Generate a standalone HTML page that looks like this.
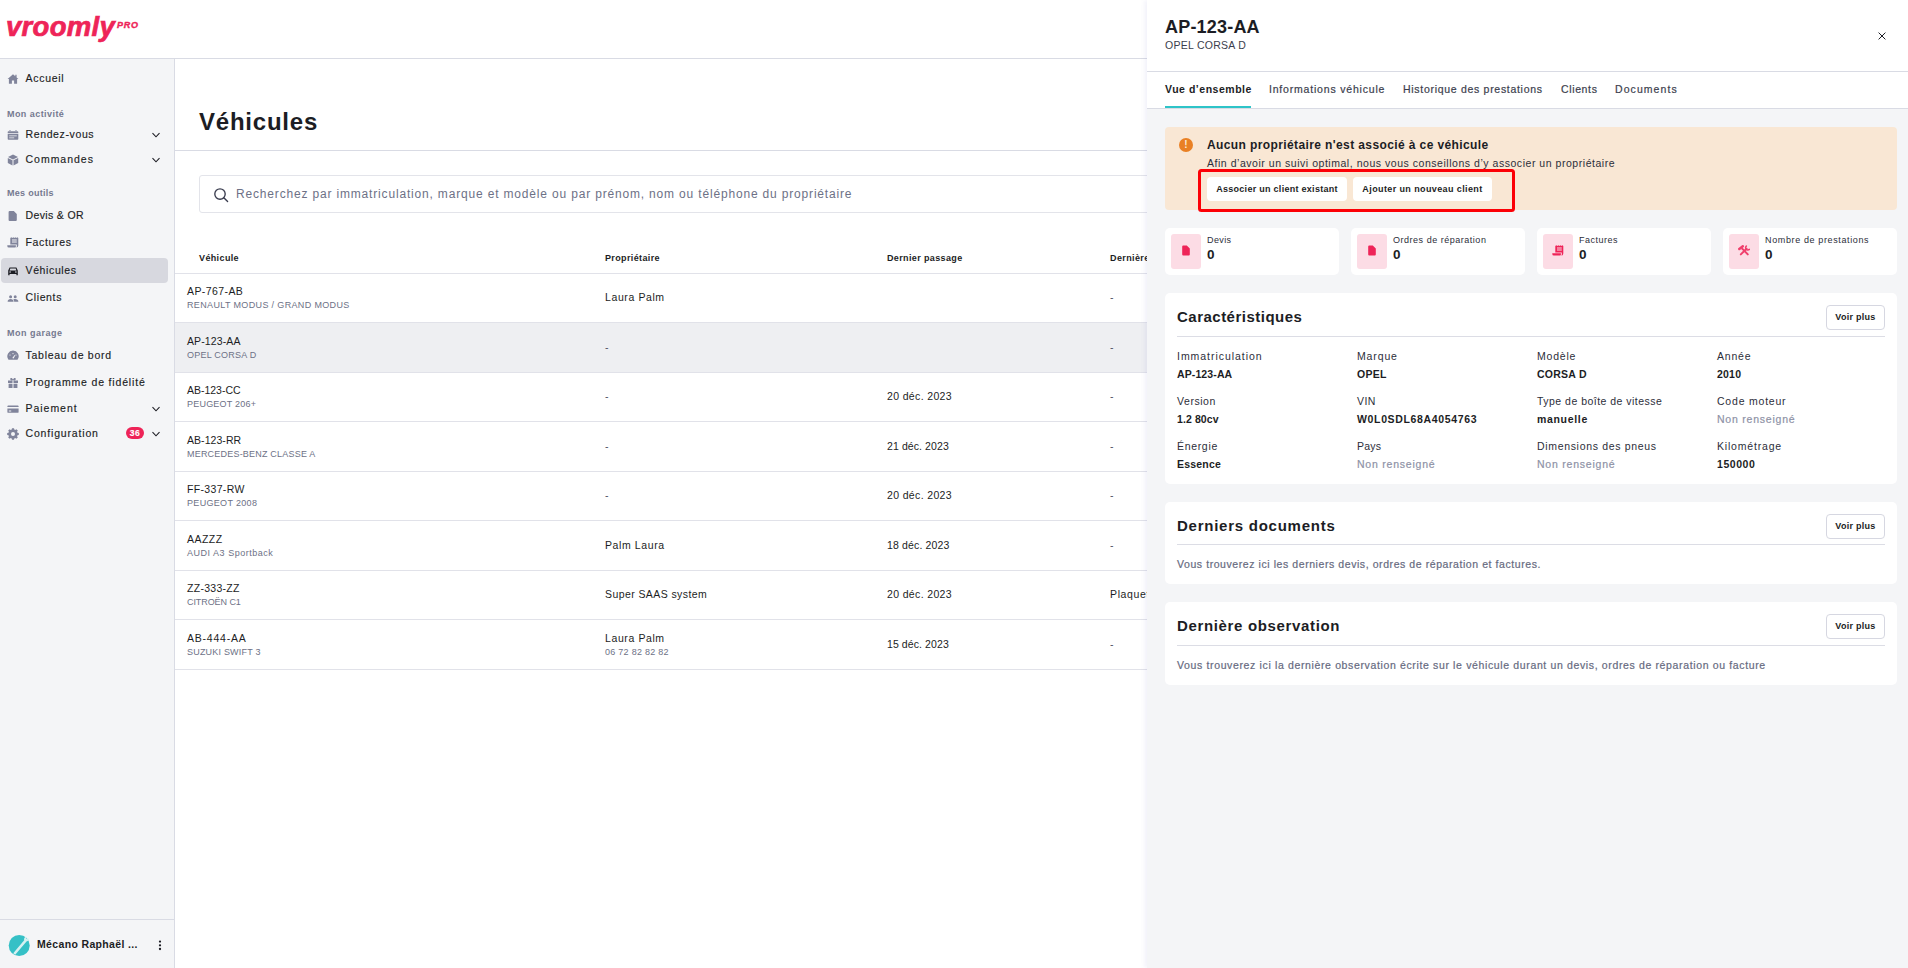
<!DOCTYPE html>
<html lang="fr"><head>
<meta charset="utf-8">
<title>Véhicules - Vroomly Pro</title>
<style>
*{box-sizing:border-box;margin:0;padding:0}
html,body{width:1908px;height:968px;overflow:hidden;background:#fff}
body{font-family:'Liberation Sans',sans-serif;font-size:10.5px;color:#1c1d24;position:relative;-webkit-font-smoothing:antialiased}
.t{white-space:nowrap;display:inline-block}
.abs{position:absolute}
/* header */
#hdr{position:absolute;left:0;top:0;width:1908px;height:59px;border-bottom:1px solid #d9dbe4;background:#fff}
#logo{position:absolute;left:6px;top:8.5px;color:#ee2458;font-weight:700;font-style:italic;font-size:27.5px;line-height:36px;letter-spacing:.3px;-webkit-text-stroke:.7px #ee2458}
#logo sup{font-size:9px;line-height:12px;position:absolute;left:111px;top:10.5px;letter-spacing:.8px;-webkit-text-stroke:.4px #ee2458}
/* sidebar */
#side{position:absolute;left:0;top:59px;width:175px;height:909px;background:#f4f5f7;border-right:1px solid #d9dbe4}
.sec{position:absolute;left:7px;font-size:9px;font-weight:600;color:#747990;line-height:12px}
.it{position:absolute;left:1px;width:167px;height:25px;border-radius:4px;display:flex;align-items:center;font-weight:500;font-size:10.5px}
.it svg.ic{position:absolute;left:6px;top:7px;width:12px;height:12px;fill:#80849b}
.it .t{position:absolute;left:24.5px;top:5px;line-height:14px;-webkit-text-stroke:.15px currentColor}
.it.act{background:#d7d8df}
.it.act svg.ic{fill:#1c1d24}
.chev{position:absolute;left:150px;top:8px;width:10px;height:10px;fill:none;stroke:#1c1d24;stroke-width:1.1}
.badge{position:absolute;left:125px;top:6.5px;width:18px;height:12px;border-radius:6px;background:#ee2458;color:#fff;font-size:8.5px;font-weight:700;text-align:center;line-height:12px}
.it .badge .t{position:static;line-height:12px}
#user{position:absolute;left:0;top:860px;width:174px;height:49px;border-top:1px solid #d9dbe4}
/* main */
#main{position:absolute;left:175px;top:59px;width:1733px;height:909px;background:#fff}
h1{position:absolute;left:24px;top:47px;font-size:24px;font-weight:600;line-height:32px}
#h1line{position:absolute;left:0;top:91px;width:100%;height:1px;background:#d9dbe4}
#search{position:absolute;left:24px;top:116px;width:1685px;height:38px;border:1px solid #e3e4ea;border-radius:3px}
#search svg{position:absolute;left:13px;top:10.5px;width:16px;height:16px;fill:none;stroke:#3a3d4f;stroke-width:1.35}
#search .t{position:absolute;left:36px;top:10px;font-size:12px;line-height:16px;color:#6d7186}
.th{position:absolute;top:193px;font-size:9px;font-weight:600;line-height:12px}
.row{position:absolute;left:0;width:100%;height:49.5px;border-top:1px solid #e1e2e9}
.row.sel{background:#eeeff2}
.row.hh .t{margin-top:1px}
.row .a{position:absolute;left:12px;top:10px;line-height:14px}
.row .b{position:absolute;left:12px;top:24.5px;font-size:9px;line-height:12px;color:#6d7186}
.row .c{position:absolute;top:15.5px;line-height:14px}
.row .c2{position:absolute;top:10px;line-height:14px}
.row .d2{position:absolute;top:24.5px;font-size:9px;line-height:12px;color:#6d7186}
/* panel */
#panel{position:absolute;left:1147px;top:0;width:761px;height:968px;background:#f4f5f7;box-shadow:-2px 0 5px rgba(90,90,190,.09)}
#phead{position:absolute;left:0;top:0;width:100%;height:72px;background:#fff;border-bottom:1px solid #d9dbe4}
#phead .ti{position:absolute;left:18px;top:15px;font-size:18px;font-weight:600;line-height:24px}
#phead .su{position:absolute;left:18px;top:38px;font-size:10.5px;line-height:14px;color:#3b3e4d}
#phead svg{position:absolute;left:730.5px;top:31.5px;width:8px;height:8px;stroke:#1c1d24;stroke-width:1}
#tabs{position:absolute;left:0;top:72px;width:100%;height:36.5px;background:#fff;border-bottom:1px solid #d9dbe4}
#tabs .t{position:absolute;top:10px;line-height:14px;font-weight:500;color:#3b3e4d;-webkit-text-stroke:.2px currentColor}
#tabs .t.on{font-weight:600;color:#1c1d24;-webkit-text-stroke:0}
#tabs i{position:absolute;left:18px;top:34px;width:86px;height:2px;background:#2ec4c8}
#alert{position:absolute;left:18px;top:127px;width:732px;height:83px;border-radius:4px;background:#f9e7d4}
#alert .ic{position:absolute;left:14px;top:11px;width:14px;height:14px;border-radius:7px;background:#e98024;color:#fbe9d9;font-size:10px;font-weight:700;text-align:center;line-height:14px}
#alert .h{position:absolute;left:42px;top:10px;font-size:12px;font-weight:600;line-height:16px}
#alert .p{position:absolute;left:42px;top:29px;line-height:14px;color:#2c2e3a}
.wbtn{position:absolute;top:50px;height:24px;border-radius:4px;background:#fff;font-size:9px;font-weight:600;text-align:center;line-height:24px}
#red{position:absolute;left:51px;top:168.5px;width:316.7px;height:43.3px;border:3px solid #fc0006;border-radius:3.5px}
.stat{position:absolute;top:228px;width:174px;height:47px;border-radius:5px;background:#fff}
.stat .bx{position:absolute;left:6px;top:6px;width:30px;height:35px;border-radius:3px;background:#fcdce5}
.stat .bx svg{position:absolute;left:10px;top:10.5px;width:10px;height:11px;fill:#ee2458}
.stat .l{position:absolute;left:42px;top:6px;font-size:9px;line-height:12px;color:#2c2e3a}
.stat .v{position:absolute;left:42px;top:18px;font-size:13.5px;font-weight:600;line-height:18px}
.card{position:absolute;left:18px;width:732px;border-radius:5px;background:#fff}
.card .h{position:absolute;left:12px;top:14px;font-size:15px;font-weight:600;line-height:20px}
.card .vb{position:absolute;left:661px;top:12px;width:59px;height:25px;border:1px solid #d6d7e1;border-radius:4px;font-size:9px;font-weight:600;text-align:center;line-height:23px}
.card .ln{position:absolute;left:12px;top:43px;width:708px;height:1px;background:#dcdde5}
.card .p{position:absolute;left:12px;line-height:14px;font-weight:500;color:#666a80;-webkit-text-stroke:.2px currentColor}
.k{position:absolute;line-height:14px;color:#2c2e3a}
.v{position:absolute;line-height:14px;font-weight:600}
.v.na{font-weight:500;color:#8e92a6;-webkit-text-stroke:.2px currentColor}
</style>
</head>
<body>
<div id="hdr"><div id="logo"><span class="t nofit">vroomly</span><sup><span class="t nofit">PRO</span></sup></div></div>

<div id="side">
  <div class="it" style="top:7px"><svg class="ic" viewBox="0 0 12 12"><path d="M6 1.2 0.6 6h1.3v4.8h3V7.6h2.2v3.2h3V6h1.3L9.6 4.4V1.8H8.3v1.5z"></path></svg><span class="t" style="letter-spacing: 0.725px;">Accueil</span></div>
  <div class="sec" style="top:49px"><span class="t" style="letter-spacing: 0.44px;">Mon activité</span></div>
  <div class="it" style="top:62.5px"><svg class="ic" viewBox="0 0 12 12"><path fill-rule="evenodd" d="M1.5 2.2h9a.8.8 0 0 1 .8.8v1.2H.7V3a.8.8 0 0 1 .8-.8zM.7 5h10.6v5a.8.8 0 0 1-.8.8h-9a.8.8 0 0 1-.8-.8zM2.2 6.5v.8h7.6v-.8zM2.2 8.400001v.8h5v-.8zM2.5 1h1v1.6h-1zM8.5 1h1v1.6h-1z"></path></svg><span class="t" style="letter-spacing: 0.622px;">Rendez-vous</span><svg class="chev" viewBox="0 0 10 10"><path d="M1.5 3.2 5 6.8l3.5-3.6"></path></svg></div>
  <div class="it" style="top:87.5px"><svg class="ic" viewBox="0 0 12 12"><path d="M6 .6 11 3 6 5.5 1 3zM.8 3.9l4.7 2.4v5.2L.8 9.1zM11.2 3.9 6.5 6.3v5.2l4.7-2.4z"></path></svg><span class="t" style="letter-spacing: 0.986px;">Commandes</span><svg class="chev" viewBox="0 0 10 10"><path d="M1.5 3.2 5 6.8l3.5-3.6"></path></svg></div>
  <div class="sec" style="top:128px"><span class="t" style="letter-spacing: 0.289px;">Mes outils</span></div>
  <div class="it" style="top:143.5px"><svg class="ic" viewBox="0 0 12 12"><path d="M2.6 1h4.2l3 3v6a1 1 0 0 1-1 1H2.6a1 1 0 0 1-1-1V2a1 1 0 0 1 1-1z"></path></svg><span class="t" style="letter-spacing: 0.352px;">Devis &amp; OR</span></div>
  <div class="it" style="top:170.5px"><svg class="ic" viewBox="0 0 12 12"><path fill-rule="evenodd" d="M3.3.9 4.3.3l1 .6 1-.6 1 .6 1-.6 1 .6 1-.6 1 .6v7.600001a2 2 0 0 1-2 2H9.2a1.6 1.6 0 0 0 .6-1.3V7.4H3.3zM5 2.6v.8h4.800001v-.8zM5 4.6v.8h4.800001v-.8zM.3 8.2h8.6v1a1.7 1.7 0 0 1-.5 1.3H1.800001A1.5 1.5 0 0 1 .3 9z"></path></svg><span class="t" style="letter-spacing: 0.66px;">Factures</span></div>
  <div class="it act" style="top:198.5px"><svg class="ic" viewBox="0 0 12 12"><path d="M2.6 2.4h6.8l1.4 3.2v4.6H9.4V9H2.6v1.2H1.2V5.6zM3.3 3.5 2.6 5.4h6.8l-.7-1.9zM3.1 6.2a.8.8 0 1 0 0 1.6.8.8 0 0 0 0-1.6zM8.9 6.2a.8.8 0 1 0 0 1.6.8.8 0 0 0 0-1.6z" fill-rule="evenodd"></path></svg><span class="t" style="letter-spacing: 0.622px;">Véhicules</span></div>
  <div class="it" style="top:225.5px"><svg class="ic" viewBox="0 0 12 12"><path d="M3.6 3.2a1.5 1.5 0 1 0 0 3 1.5 1.5 0 0 0 0-3zM8.2 3.2a1.5 1.5 0 1 0 0 3 1.5 1.5 0 0 0 0-3zM.6 9.8c0-1.8 1.3-2.8 3-2.8s3 1 3 2.8zM7.2 9.8c0-1-.3-1.8-.9-2.4.5-.3 1.2-.4 1.9-.4 1.7 0 3.2 1 3.2 2.8z"></path></svg><span class="t" style="letter-spacing: 0.632px;">Clients</span></div>
  <div class="sec" style="top:268px"><span class="t" style="letter-spacing: 0.497px;">Mon garage</span></div>
  <div class="it" style="top:283.5px"><svg class="ic" viewBox="0 0 12 12"><path d="M6 .6a5.6 5.6 0 0 0-4.8 8.6c.2.4.5.6.9.6h7.8c.4 0 .7-.2.9-.6A5.6 5.6 0 0 0 6 .6zM6 3a.6.6 0 1 1 0 1.200001.6.6 0 0 1 0-1.2zM3 4.400001a.6.6 0 1 1 0 1.2.6.6 0 0 1 0-1.2zM9 4.4a.6.6 0 1 1 0 1.2.6.6 0 0 1 0-1.2zM5.300001 8 7.6 5l.6.4L6.600001 8.600001z" fill-rule="evenodd"></path></svg><span class="t" style="letter-spacing: 0.733px;">Tableau de bord</span></div>
  <div class="it" style="top:310.5px"><svg class="ic" viewBox="0 0 12 12"><path d="M1 3.6h4.5V6H1zM6.5 3.6H11V6H6.5zM1.6 6.8h3.9V11H1.6zM6.5 6.8h3.9V11H6.5zM4.2 1C5 1 5.6 1.700001 6 2.6 6.4 1.700001 7 1 7.8 1c1.400001 0 1.400001 2.200001 0 2.200001H4.2C2.8 3.200001 2.8 1 4.2 1z"></path></svg><span class="t" style="letter-spacing: 0.827px;">Programme de fidélité</span></div>
  <div class="it" style="top:336.5px"><svg class="ic" viewBox="0 0 12 12"><path d="M1.3 2.4h9.4a.9.9 0 0 1 .9.9v.8H.4v-.8a.9.9 0 0 1 .9-.9zM.4 5.4h11.2v3.500001a.9.9 0 0 1-.9.9H1.3a.9.9 0 0 1-.9-.9zM1.8 7.4v1h2.4v-1z" fill-rule="evenodd"></path></svg><span class="t" style="letter-spacing: 0.967px;">Paiement</span><svg class="chev" viewBox="0 0 10 10"><path d="M1.5 3.2 5 6.8l3.5-3.6"></path></svg></div>
  <div class="it" style="top:361.5px"><svg class="ic" viewBox="0 0 12 12"><path d="M5 .8h2l.3 1.3.9.4 1.200001-.7 1.4 1.4-.7 1.2.4.9 1.3.3v2l-1.3.3-.4.9.7 1.200001-1.4 1.4-1.200001-.7-.9.4L7 12.4H5l-.3-1.3-.9-.4-1.2.7-1.4-1.4.7-1.200001-.4-.9L.2 7.6v-2l1.3-.3.4-.9-.7-1.2 1.4-1.4 1.2.7.9-.4zM6 4.6a2 2 0 1 0 0 4 2 2 0 0 0 0-4z" fill-rule="evenodd" transform="translate(0,-.6)"></path></svg><span class="t" style="letter-spacing: 0.833px;">Configuration</span><span class="badge"><span class="t" style="letter-spacing: 0.492px;">36</span></span><svg class="chev" viewBox="0 0 10 10"><path d="M1.5 3.2 5 6.8l3.5-3.6"></path></svg></div>
  <div id="user">
    <svg style="position:absolute;left:8px;top:14px;width:23px;height:23px;overflow:visible" viewBox="0 0 23 23"><circle cx="11.2" cy="11.5" r="10.5" fill="#35c0c6"></circle><path d="M5.2 19.3 16.2 6.2c-.5-1.400001.2-3 1.6-3.800001l.3 1.900001 1.4.9 1.6-.9c.2 1.6-1 3-2.6 3.2L7.2 20.700001z" fill="#d6f1f2"></path></svg>
    <span class="t" style="position: absolute; left: 37px; top: 17px; line-height: 14px; font-weight: 600; letter-spacing: 0.351px;">Mécano Raphaël ...</span>
    <svg style="position:absolute;left:157.7px;top:20px;width:4px;height:11px;fill:#1c1d24" viewBox="0 0 4 11"><circle cx="2" cy="1.6" r="1.15"></circle><circle cx="2" cy="5.3" r="1.15"></circle><circle cx="2" cy="9" r="1.15"></circle></svg>
  </div>
</div>

<div id="main">
  <h1><span class="t" style="letter-spacing: 0.771px;">Véhicules</span></h1>
  <div id="h1line"></div>
  <div id="search"><svg viewBox="0 0 16 16"><circle cx="7" cy="7" r="5.2"></circle><path d="M10.8 10.8 14.6 14.6" stroke-linecap="round"></path></svg><span class="t" style="letter-spacing: 0.827px;">Recherchez par immatriculation, marque et modèle ou par prénom, nom ou téléphone du propriétaire</span></div>
  <div class="th" style="left:24px"><span class="t" style="letter-spacing: 0.373px;">Véhicule</span></div>
  <div class="th" style="left:430px"><span class="t" style="letter-spacing: 0.372px;">Propriétaire</span></div>
  <div class="th" style="left:712px"><span class="t" style="letter-spacing: 0.368px;">Dernier passage</span></div>
  <div class="th" style="left:935px"><span class="t" style="letter-spacing: 0.393px;">Dernière observation</span></div>

  <div class="row" style="top:214px;height:49px"><span class="t a" style="letter-spacing: 0.41px;">AP-767-AB</span><span class="t b" style="letter-spacing: 0.351px;">RENAULT MODUS / GRAND MODUS</span><span class="t c" style="left: 430px; letter-spacing: 0.602px;">Laura Palm</span><span class="t c" style="left: 935px; color: rgb(77, 81, 98); letter-spacing: 0.516px;">-</span></div>
  <div class="row sel hh" style="top:263px;height:50px"><span class="t a" style="letter-spacing: 0.116px;">AP-123-AA</span><span class="t b" style="letter-spacing: 0.236px;">OPEL CORSA D</span><span class="t c" style="left: 430px; color: rgb(77, 81, 98); letter-spacing: 0.516px;">-</span><span class="t c" style="left: 935px; color: rgb(77, 81, 98); letter-spacing: 0.516px;">-</span></div>
  <div class="row" style="top:313px;height:49px"><span class="t a" style="letter-spacing: -0.012px;">AB-123-CC</span><span class="t b" style="letter-spacing: 0.216px;">PEUGEOT 206+</span><span class="t c" style="left: 430px; color: rgb(77, 81, 98); letter-spacing: 0.516px;">-</span><span class="t c" style="left: 712px; letter-spacing: 0.355px;">20 déc. 2023</span><span class="t c" style="left: 935px; color: rgb(77, 81, 98); letter-spacing: 0.516px;">-</span></div>
  <div class="row hh" style="top:362px;height:50px"><span class="t a" style="letter-spacing: 0.052px;">AB-123-RR</span><span class="t b" style="letter-spacing: 0.203px;">MERCEDES-BENZ CLASSE A</span><span class="t c" style="left: 430px; color: rgb(77, 81, 98); letter-spacing: 0.516px;">-</span><span class="t c" style="left: 712px; letter-spacing: 0.094px;">21 déc. 2023</span><span class="t c" style="left: 935px; color: rgb(77, 81, 98); letter-spacing: 0.516px;">-</span></div>
  <div class="row" style="top:412px;height:49px"><span class="t a" style="letter-spacing: 0.337px;">FF-337-RW</span><span class="t b" style="letter-spacing: 0.32px;">PEUGEOT 2008</span><span class="t c" style="left: 430px; color: rgb(77, 81, 98); letter-spacing: 0.516px;">-</span><span class="t c" style="left: 712px; letter-spacing: 0.355px;">20 déc. 2023</span><span class="t c" style="left: 935px; color: rgb(77, 81, 98); letter-spacing: 0.516px;">-</span></div>
  <div class="row hh" style="top:461px;height:50px"><span class="t a" style="letter-spacing: 0.481px;">AAZZZ</span><span class="t b" style="letter-spacing: 0.519px;">AUDI A3 Sportback</span><span class="t c" style="left: 430px; letter-spacing: 0.602px;">Palm Laura</span><span class="t c" style="left: 712px; letter-spacing: 0.155px;">18 déc. 2023</span><span class="t c" style="left: 935px; color: rgb(77, 81, 98); letter-spacing: 0.516px;">-</span></div>
  <div class="row" style="top:511px;height:49px"><span class="t a" style="letter-spacing: 0.278px;">ZZ-333-ZZ</span><span class="t b" style="letter-spacing: -0.077px;">CITROËN C1</span><span class="t c" style="left: 430px; letter-spacing: 0.415px;">Super SAAS system</span><span class="t c" style="left: 712px; letter-spacing: 0.355px;">20 déc. 2023</span><span class="t c" style="left: 935px; letter-spacing: 0.623px;">Plaquettes de frein à changer</span></div>
  <div class="row hh" style="top:560px;height:50px"><span class="t a" style="letter-spacing: 0.771px;">AB-444-AA</span><span class="t b" style="letter-spacing: 0.196px;">SUZUKI SWIFT 3</span><span class="t c2" style="left: 430px; letter-spacing: 0.602px;">Laura Palm</span><span class="t d2" style="left: 430px; letter-spacing: 0.271px;">06 72 82 82 82</span><span class="t c" style="left: 712px; letter-spacing: 0.092px;">15 déc. 2023</span><span class="t c" style="left: 935px; color: rgb(77, 81, 98); letter-spacing: 0.516px;">-</span></div>
  <div class="row" style="top:610px;height:1px"></div>
</div>

<div id="panel">
  <div id="phead"><span class="t ti" style="letter-spacing: 0.193px;">AP-123-AA</span><span class="t su" style="letter-spacing: 0.273px;">OPEL CORSA D</span><svg viewBox="0 0 8 8"><path d="M.6.6 7.4 7.4M7.4.6.6 7.4"></path></svg></div>
  <div id="tabs">
    <span class="t on" style="left: 18px; letter-spacing: 0.525px;">Vue d’ensemble</span>
    <span class="t" style="left: 122px; letter-spacing: 0.807px;">Informations véhicule</span>
    <span class="t" style="left: 256px; letter-spacing: 0.704px;">Historique des prestations</span>
    <span class="t" style="left: 414px; letter-spacing: 0.632px;">Clients</span>
    <span class="t" style="left: 468px; letter-spacing: 1.069px;">Documents</span>
    <i></i>
  </div>
  <div id="alert">
    <div class="ic">!</div>
    <span class="t h" style="letter-spacing: 0.39px;">Aucun propriétaire n'est associé à ce véhicule</span>
    <span class="t p" style="letter-spacing: 0.535px;">Afin d’avoir un suivi optimal, nous vous conseillons d’y associer un propriétaire</span>
    <div class="wbtn" style="left:42px;width:140px"><span class="t" style="letter-spacing: 0.28px;">Associer un client existant</span></div>
    <div class="wbtn" style="left:188px;width:139px"><span class="t" style="letter-spacing: 0.392px;">Ajouter un nouveau client</span></div>
  </div>
  <div id="red"></div>

  <div class="stat" style="left:18px"><div class="bx"><svg viewBox="0 0 10 11"><path d="M2.2.6h3.6l3 3v5.8a1 1 0 0 1-1 1H2.2a1 1 0 0 1-1-1V1.6a1 1 0 0 1 1-1z"></path></svg></div><span class="t l" style="letter-spacing: 0.394px;">Devis</span><span class="t v" style="letter-spacing: 1.578px;">0</span></div>
  <div class="stat" style="left:204px"><div class="bx"><svg viewBox="0 0 10 11"><path d="M2.2.6h3.6l3 3v5.8a1 1 0 0 1-1 1H2.2a1 1 0 0 1-1-1V1.6a1 1 0 0 1 1-1z"></path></svg></div><span class="t l" style="letter-spacing: 0.518px;">Ordres de réparation</span><span class="t v" style="letter-spacing: 1.578px;">0</span></div>
  <div class="stat" style="left:390px"><div class="bx"><svg viewBox="0 0 12 12" style="left:9px;top:10.5px;width:12px;height:12px"><path fill-rule="evenodd" d="M3.3.9 4.3.3l1 .6 1-.6 1 .6 1-.6 1 .6 1-.6 1 .6v7.600001a2 2 0 0 1-2 2H9.2a1.6 1.6 0 0 0 .6-1.3V7.4H3.3zM5 2.6v.8h4.800001v-.8zM5 4.6v.8h4.800001v-.8zM.3 8.2h8.6v1a1.7 1.7 0 0 1-.5 1.3H1.800001A1.5 1.5 0 0 1 .3 9z"></path></svg></div><span class="t l" style="letter-spacing: 0.494px;">Factures</span><span class="t v" style="letter-spacing: 1.578px;">0</span></div>
  <div class="stat" style="left:576px"><div class="bx"><svg viewBox="0 0 12 12" style="left:9px;top:10.5px;width:12px;height:12px;fill:none;stroke:#ee2458;opacity:.85"><path d="M1.3 3.900001 4.800001 1.3" stroke-width="2.5" stroke-linecap="round"></path><path d="M4.2 3.6 9.8 9.400001" stroke-width="2" stroke-linecap="round"></path><path d="M2.8 9.400001 8.6 3.8" stroke-width="2" stroke-linecap="round"></path><path d="M8.3 1.1a2.2 2.2 0 1 0 3.100001 3.3" stroke-width="1.5" stroke-linecap="round"></path></svg></div><span class="t l" style="letter-spacing: 0.626px;">Nombre de prestations</span><span class="t v" style="letter-spacing: 1.578px;">0</span></div>

  <div class="card c1" style="top:293px;height:191px">
    <span class="t h" style="letter-spacing: 0.488px;">Caractéristiques</span><div class="vb"><span class="t" style="letter-spacing: 0.271px;">Voir plus</span></div><div class="ln"></div>
    <span class="t k" style="left: 12px; top: 56px; letter-spacing: 0.961px;">Immatriculation</span><span class="t v" style="left: 12px; top: 74px; letter-spacing: 0.113px;">AP-123-AA</span>
    <span class="t k" style="left: 192px; top: 56px; letter-spacing: 0.87px;">Marque</span><span class="t v" style="left: 192px; top: 74px; letter-spacing: 0.273px;">OPEL</span>
    <span class="t k" style="left: 372px; top: 56px; letter-spacing: 0.799px;">Modèle</span><span class="t v" style="left: 372px; top: 74px; letter-spacing: 0.246px;">CORSA D</span>
    <span class="t k" style="left: 552px; top: 56px; letter-spacing: 0.809px;">Année</span><span class="t v" style="left: 552px; top: 74px; letter-spacing: 0.219px;">2010</span>
    <span class="t k" style="left: 12px; top: 101px; letter-spacing: 0.556px;">Version</span><span class="t v" style="left: 12px; top: 119px; letter-spacing: 0.102px;">1.2 80cv</span>
    <span class="t k" style="left: 192px; top: 101px; letter-spacing: 0.458px;">VIN</span><span class="t v" style="left: 192px; top: 119px; letter-spacing: 0.654px;">W0L0SDL68A4054763</span>
    <span class="t k" style="left: 372px; top: 101px; letter-spacing: 0.481px;">Type de boîte de vitesse</span><span class="t v" style="left: 372px; top: 119px; letter-spacing: 0.672px;">manuelle</span>
    <span class="t k" style="left: 552px; top: 101px; letter-spacing: 0.791px;">Code moteur</span><span class="t v na" style="left: 552px; top: 119px; letter-spacing: 0.775px;">Non renseigné</span>
    <span class="t k" style="left: 12px; top: 146px; letter-spacing: 0.672px;">Énergie</span><span class="t v" style="left: 12px; top: 164px; letter-spacing: 0.21px;">Essence</span>
    <span class="t k" style="left: 192px; top: 146px; letter-spacing: 0.195px;">Pays</span><span class="t v na" style="left: 192px; top: 164px; letter-spacing: 0.775px;">Non renseigné</span>
    <span class="t k" style="left: 372px; top: 146px; letter-spacing: 0.672px;">Dimensions des pneus</span><span class="t v na" style="left: 372px; top: 164px; letter-spacing: 0.775px;">Non renseigné</span>
    <span class="t k" style="left: 552px; top: 146px; letter-spacing: 0.813px;">Kilométrage</span><span class="t v" style="left: 552px; top: 164px; letter-spacing: 0.56px;">150000</span>
  </div>
  <div class="card" style="top:502px;height:82px">
    <span class="t h" style="letter-spacing: 0.746px;">Derniers documents</span><div class="vb"><span class="t" style="letter-spacing: 0.271px;">Voir plus</span></div><div class="ln" style="top:42px"></div>
    <span class="t p" style="top: 55px; letter-spacing: 0.573px;">Vous trouverez ici les derniers devis, ordres de réparation et factures.</span>
  </div>
  <div class="card" style="top:602px;height:82.5px">
    <span class="t h" style="letter-spacing: 0.654px;">Dernière observation</span><div class="vb"><span class="t" style="letter-spacing: 0.271px;">Voir plus</span></div><div class="ln" style="top:42.5px"></div>
    <span class="t p" style="top: 56px; letter-spacing: 0.639px;">Vous trouverez ici la dernière observation écrite sur le véhicule durant un devis, ordres de réparation ou facture</span>
  </div>
</div>


</body></html>
